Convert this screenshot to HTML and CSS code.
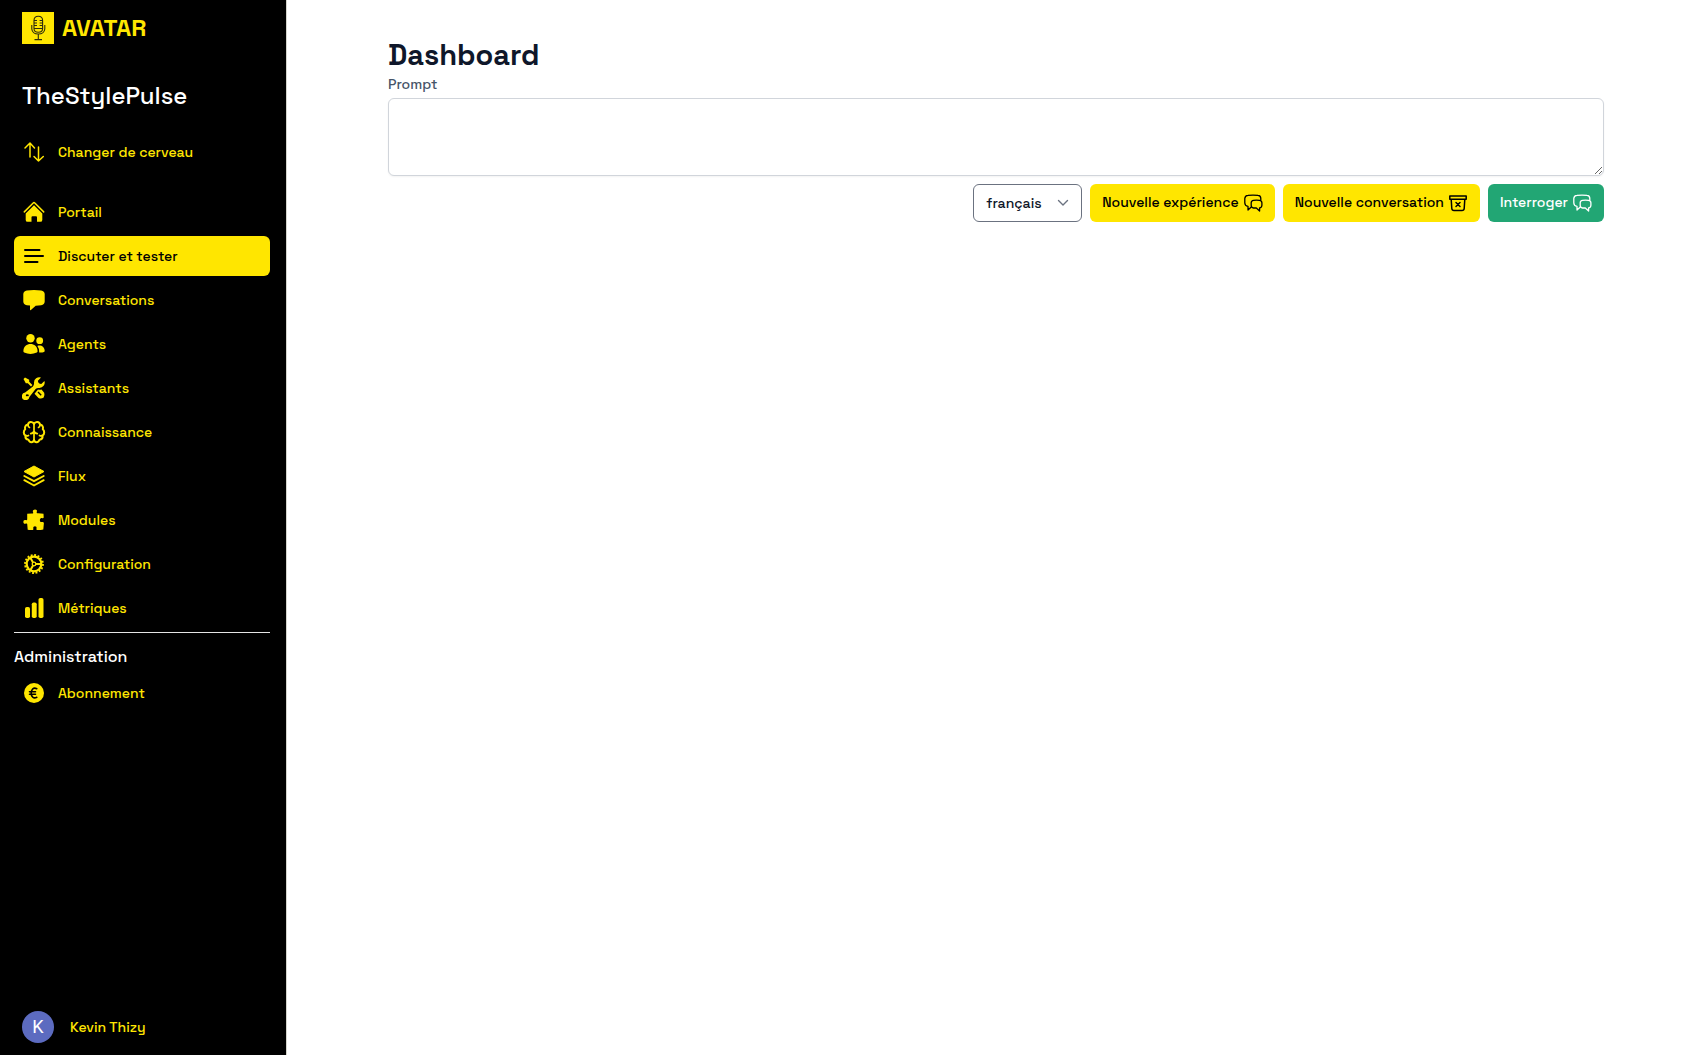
FILE: index.html
```html
<!DOCTYPE html>
<html lang="fr">
<head>
<meta charset="utf-8">
<meta name="viewport" content="width=device-width, initial-scale=1">
<title>Avatar – Dashboard</title>
<link rel="stylesheet" href="styles.css">
</head>
<body>
<svg class="sprite" aria-hidden="true">
  <symbol id="chats" viewBox="0 0 20 20">
    <g fill="none" stroke="currentColor" stroke-width="1.3" stroke-linejoin="round" stroke-linecap="round">
      <path d="M17.800 7V5.500Q17.800 2.600 15 2.400Q10 1.800 5 2.400Q2 2.600 1.800 5.500V10Q2 13 5 13.300V17L8 14.300"/>
      <path d="M10.500 7.300Q13.500 7 16.500 7.300Q18.800 7.500 18.900 9.800V12.200Q18.800 14.600 16.600 14.800V18L13.300 15H10.500Q8.300 14.800 8.200 12.500V9.800Q8.300 7.500 10.500 7.300Z"/>
    </g>
  </symbol>
</svg>
<div class="layout">
  <aside class="sidebar">
    <a class="brand" href="#">
      <svg class="brand-mark" viewBox="0 0 32 32" aria-hidden="true">
        <path fill="#ffe600" d="M0 0H32V32H0Z"/>
        <g fill="none" stroke="#2b2a10" stroke-width="1.1">
          <path d="M12 8.500Q12 4.300 16.300 4.300T20.600 8.500V16.500Q20.600 20.300 16.300 20.300T12 16.500ZM9.800 13V17Q10.300 22 16.300 22T22.800 17V13M16.300 22V27.600M12.500 27.600H20M12 16.500H20.600M12 8.500H15M17.600 8.500H20.600M12 11H15M17.600 11H20.600M12 13.500H15M17.600 13.500H20.600"/>
        </g>
      </svg>
      <span class="brand-name">AVATAR</span>
    </a>
    <p class="workspace">TheStylePulse</p>
    <nav class="nav" aria-label="Navigation principale">
      <a class="nav-item nav-switch" href="#">
        <svg class="icon" viewBox="0 0 24 24" aria-hidden="true"><path fill="none" stroke="currentColor" stroke-width="1.500" stroke-linecap="round" stroke-linejoin="round" d="M8 17V3M3 8L8 3L12.500 8M16.500 7V21M12 16.500L16.500 21L21.300 16.500"/></svg>
        Changer de cerveau
      </a>
      <a class="nav-item" href="#">
        <svg class="icon" viewBox="0 0 24 24" aria-hidden="true"><path fill="none" stroke="currentColor" stroke-width="1.500" stroke-linecap="round" stroke-linejoin="round" d="M2.300 11.900L11.200 3Q12 2.200 12.800 3L21.700 11.900"/><path fill="currentColor" d="M12 5.300L20.300 13.600V19.900Q20.300 21.800 18.400 21.800H15V17.300Q15 16.300 14 16.300H10.500Q9.500 16.300 9.500 17.300V21.800H5.600Q3.700 21.800 3.700 19.900V13.600Z"/></svg>
        Portail
      </a>
      <a class="nav-item active" href="#" aria-current="page">
        <svg class="icon" viewBox="0 0 24 24" aria-hidden="true"><path fill="none" stroke="currentColor" stroke-width="2" stroke-linecap="round" d="M3 6H17.500M3 12H21M3 18H15.500"/></svg>
        Discuter et tester
      </a>
      <a class="nav-item" href="#">
        <svg class="icon" viewBox="0 0 24 24" aria-hidden="true"><path fill="currentColor" d="M4.800 2.500Q12 1.700 19.200 2.500Q22.500 3 22.700 6V13.500Q22.500 16.700 19.200 17.200Q16.500 17.500 13.700 17.700L8.900 22.100Q8 22.700 8 21.500V17.500L4.800 17.200Q1.500 16.700 1.300 13.500V6Q1.500 3 4.800 2.500Z"/></svg>
        Conversations
      </a>
      <a class="nav-item" href="#">
        <svg class="icon" viewBox="0 0 24 24" aria-hidden="true"><g fill="currentColor"><circle cx="8.500" cy="6.200" r="4.200"/><circle cx="17.700" cy="8.700" r="3.400"/><path d="M1.400 19.200C1.400 9.600 15.600 9.600 15.600 19.200Q15.600 20.200 14.800 20.600Q8.500 23.300 2.200 20.600Q1.400 20.200 1.400 19.200ZM17.200 20.500Q17.800 17 15.400 13.900C19 12.700 22.700 14.800 22.700 19Q22.700 19.700 22 20Q19.800 20.800 17.200 20.500Z"/></g></svg>
        Agents
      </a>
      <a class="nav-item" href="#">
        <svg class="icon" viewBox="0 0 24 24" aria-hidden="true"><path fill="currentColor" fill-rule="evenodd" d="M12 6.800A5.300 5.300 0 0 1 19 1.600L15.900 4.700Q15.900 7.700 19.300 8L22.400 5A5.300 5.300 0 0 1 17.200 12Q14.800 11.700 13.600 13.100L7.400 20.900A3.800 3.800 0 1 1 3.100 16.600L10.900 10.400Q12.300 9.200 12 6.800ZM5.300 18.600A.9 .9 0 1 0 5.300 20A.9 .9 0 1 0 5.300 18.600Z"/><path fill="currentColor" d="M1.500 3L3 1.500L7.200 3.800V5.800L10.400 9L9 10.400L5.800 7.200H3.800Z"/><path fill="currentColor" fill-rule="evenodd" d="M16 13.600Q18 14 19.500 13.500L22.200 16.800Q23 19.500 21.700 21.500Q19 23.400 16.500 22L12.500 17.800ZM15.500 16.500L18.700 19.700L19.700 18.700L16.500 15.500Z"/></svg>
        Assistants
      </a>
      <a class="nav-item" href="#">
        <svg class="icon" viewBox="0 0 24 24" aria-hidden="true"><path fill="none" stroke="currentColor" stroke-width="2" stroke-linecap="round" stroke-linejoin="round" d="M12 4C10.500 1 6.500 1.500 6 4.500C3.200 5 2.600 7.300 3.200 9.300C1.300 10.800 1.300 14.200 3.400 15.500C3.200 18.100 4.500 19.500 6.500 19.700C7.500 23 11.300 23 12 20C12.700 23 16.500 23 17.500 19.700C19.500 19.500 20.800 18.100 20.600 15.500C22.700 14.200 22.700 10.800 20.800 9.300C21.400 7.300 20.800 5 18 4.500C17.500 1.500 13.500 1 12 4Z"/><path fill="none" stroke="currentColor" stroke-width="1.700" stroke-linecap="round" stroke-linejoin="round" d="M12 4V20M8.700 13.700Q11.500 13.300 12 11Q12.500 13.300 15.300 13.700M6 5Q6 7 7.500 7.500M18 5Q18 7 16.500 7.500M4 15.500Q5 16.300 6.500 15.500M20 15.500Q19 16.300 17.500 15.500"/></svg>
        Connaissance
      </a>
      <a class="nav-item" href="#">
        <svg class="icon" viewBox="0 0 24 24" aria-hidden="true"><path fill="currentColor" stroke="currentColor" stroke-linejoin="round" d="M12 2L22 7.500L12 13L2 7.500Z"/><path fill="none" stroke="currentColor" stroke-width="1.900" stroke-linecap="round" stroke-linejoin="round" d="M2.300 12L12 17.200L21.700 12M2.300 16.200L12 21.500L21.700 16.200"/></svg>
        Flux
      </a>
      <a class="nav-item" href="#">
        <svg class="icon" viewBox="0 0 24 24" aria-hidden="true"><path fill="currentColor" d="M5.200 5.800Q8 5.300 10.800 5.400Q11.700 5.200 11 4.200C9.500 1 16.200 .5 14.800 4Q14.300 5.200 15.200 5.300Q18.500 5.200 21.500 5.700L21.700 9.500Q21.300 10.600 20 10C17.400 9 17 15 20 14Q21.500 13.500 21.900 15L21.300 21.500Q18 22.200 15 22Q14 21.700 14.500 20.600C15.400 17.500 10.600 17.500 11.300 20.600Q11.700 21.800 10.800 22Q8 22.200 5.700 21.700L5.200 16Q5 15 3.900 15.600C.7 17 .5 10.800 3.700 12.100Q5 12.600 5.200 11.500Z"/></svg>
        Modules
      </a>
      <a class="nav-item" href="#">
        <svg class="icon" viewBox="0 0 24 24" aria-hidden="true"><g fill="none" stroke="currentColor"><circle cx="12" cy="12" r="9" stroke-width="1.800" stroke-dasharray="1.900 1.627"/><circle cx="12" cy="12" r="7.300" stroke-width="2.200"/><circle cx="12" cy="12" r="1.800" stroke-width="1.300"/><path stroke-width="2" d="M13.500 12H19M11 10.500L8.500 6M11 13.500L8.500 18"/></g></svg>
        Configuration
      </a>
      <a class="nav-item" href="#">
        <svg class="icon" viewBox="0 0 24 24" aria-hidden="true"><g fill="currentColor"><rect x="3" y="11" width="5" height="11" rx="1.800"/><rect x="9.800" y="6.500" width="4.900" height="15.500" rx="1.800"/><rect x="16.500" y="2" width="5" height="20" rx="1.800"/></g></svg>
        Métriques
      </a>
    </nav>
    <section class="admin">
      <h2 class="admin-title">Administration</h2>
      <a class="nav-item" href="#">
        <svg class="icon" viewBox="0 0 24 24" aria-hidden="true"><circle cx="12" cy="12" r="10" fill="currentColor"/><path fill="none" stroke="#000" stroke-width="1.600" stroke-linecap="round" d="M14.800 7.700C11.500 6 9.300 8.200 9.200 12S11.500 18 14.800 16.300M7.500 10.700H13.500M7.500 13.200H13.500"/></svg>
        Abonnement
      </a>
    </section>
    <a class="user" href="#">
      <span class="avatar">K</span>
      <span>Kevin Thizy</span>
    </a>
  </aside>
  <main class="main">
    <div class="content">
      <h1 class="title">Dashboard</h1>
      <form class="prompt-form">
        <label class="label" for="prompt">Prompt</label>
        <textarea class="prompt" id="prompt" name="prompt"></textarea>
        <div class="actions">
          <div class="select-wrap">
            <select class="select" name="langue" aria-label="Langue">
              <option>français</option>
              <option>anglais</option>
            </select>
            <svg class="chevron" viewBox="0 0 12 12" aria-hidden="true"><path fill="none" stroke="currentColor" stroke-width="1.400" stroke-linecap="round" stroke-linejoin="round" d="M1.500 3.500L6 8L10.500 3.500"/></svg>
          </div>
          <button class="button" type="button">Nouvelle expérience <svg class="button-icon" aria-hidden="true"><use href="#chats"/></svg></button>
          <button class="button" type="button">Nouvelle conversation <svg class="button-icon" viewBox="0 0 20 20" aria-hidden="true"><path fill="none" stroke="currentColor" stroke-width="1.500" stroke-linecap="round" stroke-linejoin="round" d="M1.800 3H18.200V6.300H1.800ZM3.200 6.300L3.800 15.500Q4 17.500 6 17.500H14Q16 17.500 16.200 15.500L16.800 6.300M8 9.500L12 13.500M12 9.500L8 13.500"/></svg></button>
          <button class="button button-primary" type="submit">Interroger <svg class="button-icon" aria-hidden="true"><use href="#chats"/></svg></button>
        </div>
      </form>
    </div>
  </main>
</div>
</body>
</html>
```

FILE: styles.css
```css
*, *::before, *::after { box-sizing: border-box; }

body {
  margin: 0;
  background: #fff;
  color: #0f172a;
  font: 500 14px/20px "Space Grotesk", Inter, sans-serif;
}

a { color: inherit; text-decoration: none; }
h1, h2, p { margin: 0; }
button, select, textarea { font: inherit; margin: 0; }
.sprite { position: absolute; width: 0; height: 0; }

.layout { display: flex; min-height: 100vh; }

.sidebar {
  display: flex;
  flex: 0 0 287px;
  flex-direction: column;
  padding: 12px 16px 12px 14px;
  border-right: 1px solid #d4d4cc;
  background: #000;
  color: #ffe600;
}

.brand { display: flex; align-items: center; gap: 8px; padding-left: 8px; }
.brand-mark { width: 32px; height: 32px; }
.brand-name { font-size: 24px; font-weight: 600; line-height: 32px; }

.workspace {
  margin-top: 36px;
  padding-left: 8px;
  color: #fff;
  font-size: 24px;
  line-height: 32px;
}

.nav {
  display: flex;
  flex-direction: column;
  gap: 4px;
  margin-top: 20px;
  padding-bottom: 4px;
  border-bottom: 1px solid #e5e5e5;
}

.nav-item {
  display: flex;
  align-items: center;
  gap: 12px;
  height: 40px;
  padding: 8px;
  border-radius: 6px;
}
.nav-switch { margin-bottom: 16px; }
.active { background: #ffe600; color: #000; }
.icon { flex: none; width: 24px; height: 24px; }

.admin-title {
  margin: 12px 0 4px;
  color: #fff;
  font-size: 16px;
  font-weight: 500;
  line-height: 24px;
}

.user {
  display: flex;
  align-items: center;
  gap: 16px;
  margin-top: auto;
  padding-left: 8px;
}
.avatar {
  width: 32px;
  height: 32px;
  border-radius: 50%;
  background: #5c6bc0;
  color: #fff;
  font: 400 18px/32px Roboto, sans-serif;
  text-align: center;
}

.main { flex: 1; min-width: 0; padding: 36px 32px 36px 35px; }
.content { max-width: 1216px; margin: 0 auto; }

.title { font-size: 29px; font-weight: 700; line-height: 38px; }
.prompt-form { display: flex; flex-direction: column; }
.label { color: #475569; }

.prompt {
  width: 100%;
  height: 78px;
  margin-top: 4px;
  padding: 8px 12px;
  border: 1px solid #d1d5db;
  border-radius: 6px;
  background: #fff;
  box-shadow: 0 1px 2px rgb(0 0 0 / 5%);
  resize: vertical;
}

.actions {
  display: flex;
  flex-wrap: wrap;
  justify-content: flex-end;
  gap: 8px;
  margin-top: 8px;
}

.select-wrap { display: grid; align-items: center; width: 109px; }
.select, .chevron { grid-area: 1 / 1; }
.select {
  width: 100%;
  height: 38px;
  padding: 0 32px 0 12px;
  border: 1px solid #6b7280;
  border-radius: 6px;
  background: #fff;
  color: #0f172a;
  appearance: none;
}
.chevron {
  justify-self: end;
  width: 12px;
  height: 12px;
  margin-right: 13px;
  color: #6b7280;
  pointer-events: none;
}

.button {
  display: flex;
  align-items: center;
  gap: 4px;
  height: 38px;
  padding: 0 12px 2px;
  border: 0;
  border-radius: 6px;
  background: #ffe600;
  color: #000;
}
.button-primary { background: #22a674; color: #fff; }
.button-icon { width: 20px; height: 20px; margin-top: 2px; }
```
